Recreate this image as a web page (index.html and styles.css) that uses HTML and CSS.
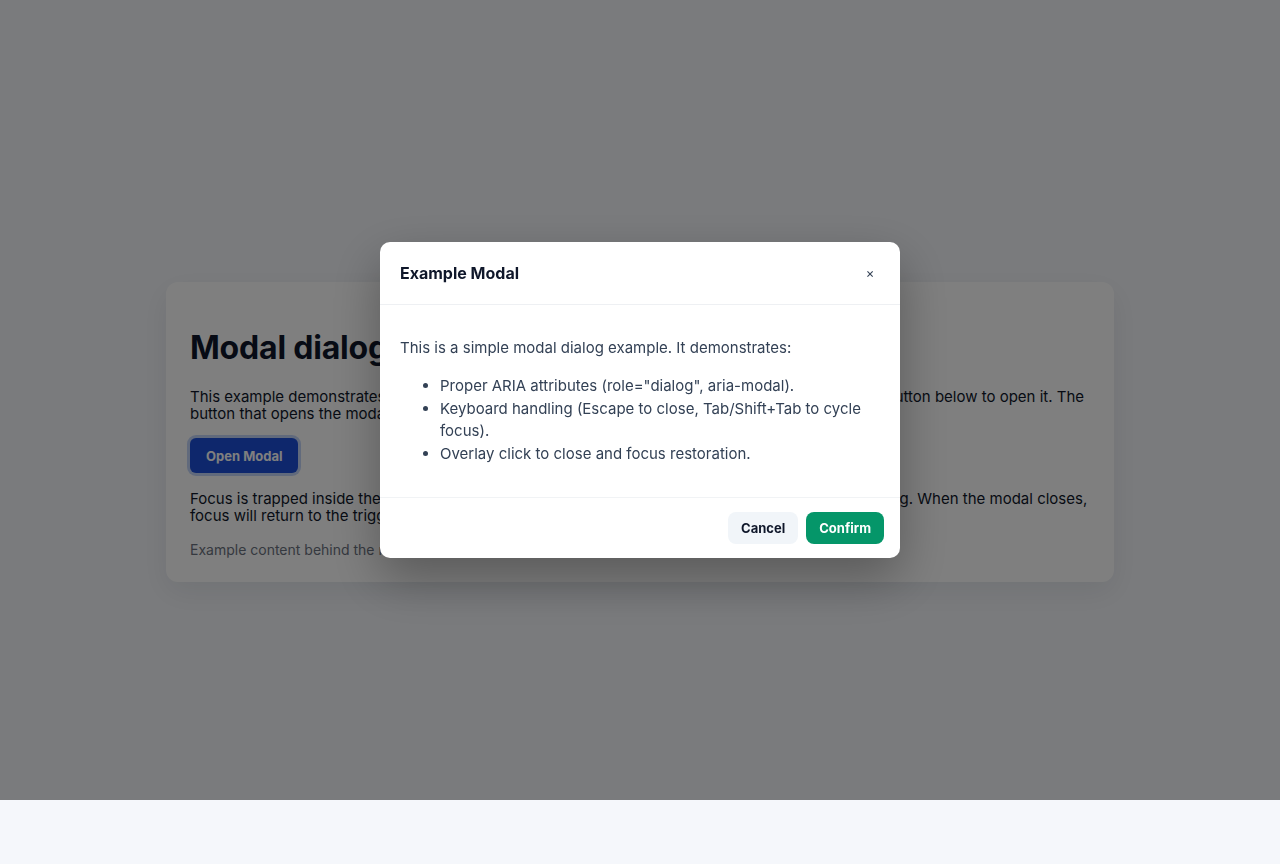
FILE: index.html
```html
<!DOCTYPE html>
<html lang="en">
<head>
<meta charset="utf-8">
<title>Modal dialog</title>
<link rel="stylesheet" href="styles.css">
</head>
<body>
<main class="card">
  <h1 class="title">Modal dialog</h1>
  <p class="text">This example demonstrates an accessible modal dialog with correct focus management. Click the button below to open it. The button that opens the modal receives focus again when it closes.</p>
  <button class="btn-open" type="button">Open Modal</button>
  <p class="text">Focus is trapped inside the modal while it is open: Tab and Shift+Tab cycle through items in the dialog. When the modal closes, focus will return to the trigger button.</p>
  <p class="muted">Example content behind the modal.</p>
</main>

<div class="overlay">
  <div class="modal" role="dialog" aria-modal="true" aria-labelledby="modal-title">
    <header class="modal-header">
      <h2 id="modal-title" class="modal-title">Example Modal</h2>
      <button class="modal-close" type="button" aria-label="Close">&times;</button>
    </header>
    <div class="modal-body">
      <p class="modal-text">This is a simple modal dialog example. It demonstrates:</p>
      <ul class="modal-list">
        <li>Proper ARIA attributes (role="dialog", aria-modal).</li>
        <li>Keyboard handling (Escape to close, Tab/Shift+Tab to cycle focus).</li>
        <li>Overlay click to close and focus restoration.</li>
      </ul>
    </div>
    <footer class="modal-footer">
      <button class="btn btn-cancel" type="button">Cancel</button>
      <button class="btn btn-confirm" type="button">Confirm</button>
    </footer>
  </div>
</div>
</body>
</html>
```

FILE: styles.css
```css
html, body {
  margin: 0;
  padding: 0;
}
body {
  background: #f5f7fb;
  font-family: Inter, "Noto Sans", sans-serif;
  color: #0f172a;
  min-height: 864px;
  display: flex;
  align-items: center;
  justify-content: center;
}
.card {
  box-sizing: border-box;
  width: 948px;
  background: #ffffff;
  border-radius: 12px;
  padding: 24px;
  box-shadow: 0 10px 30px rgba(15, 23, 42, 0.08);
}
.title {
  font-size: 32px;
  font-weight: 700;
  line-height: 1.21;
  margin: 23px 0 21px;
  color: #0f172a;
  letter-spacing: -0.2px;
}
.text {
  font-size: 15px;
  line-height: 17px;
  margin: 0;
}
.btn-open {
  display: block;
  margin: 16px 0 17px;
  height: 35px;
  padding: 0 16px;
  border: none;
  border-radius: 6px;
  background: #1d4fd8;
  color: #ffffff;
  font-family: inherit;
  font-size: 13px;
  font-weight: 700;
  box-shadow: 0 0 0 3px rgba(37, 99, 235, 0.28);
}
.muted {
  margin: 17px 0 0;
  font-size: 14px;
  line-height: 17px;
  color: #6b7280;
}

.overlay {
  position: fixed;
  top: 0;
  left: 0;
  right: 0;
  height: 800px;
  background: rgba(0, 0, 0, 0.5);
  display: flex;
  align-items: center;
  justify-content: center;
}
.modal {
  width: 520px;
  background: #ffffff;
  border-radius: 10px;
  box-shadow: 0 20px 50px rgba(0, 0, 0, 0.3);
  overflow: hidden;
}
.modal-header {
  display: flex;
  align-items: center;
  justify-content: space-between;
  padding: 20px;
  border-bottom: 1px solid #eef0f3;
}
.modal-title {
  margin: 0;
  font-size: 16px;
  line-height: 20px;
  font-weight: 700;
  color: #0f172a;
}
.modal-close {
  border: none;
  background: transparent;
  width: 22px;
  height: 22px;
  padding: 0;
  margin-right: -1px;
  font-family: inherit;
  font-size: 13px;
  line-height: 22px;
  color: #334155;
}
.modal-body {
  padding: 16px 20px;
  color: #334155;
  font-size: 15px;
  line-height: 1.5;
}
.modal-text {
  margin: 16px 0;
}
.modal-list {
  margin: 16px 0;
  padding-left: 40px;
}
.modal-footer {
  display: flex;
  justify-content: flex-end;
  gap: 8px;
  padding: 14px 16px;
  border-top: 1px solid #f1f3f5;
}
.btn {
  height: 32px;
  border: none;
  border-radius: 8px;
  padding: 0 13px;
  font-family: inherit;
  font-size: 13px;
  font-weight: 700;
}
.btn-cancel {
  background: #f1f5f9;
  color: #0f172a;
}
.btn-confirm {
  background: #059669;
  color: #ffffff;
}
```
